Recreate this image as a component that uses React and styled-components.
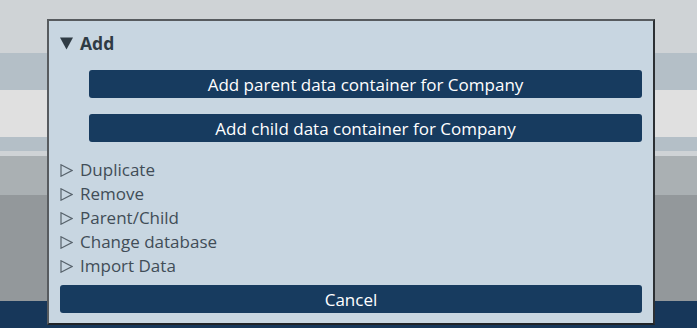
import styled, { createGlobalStyle } from "styled-components";

const GlobalStyle = createGlobalStyle`
  html, body {
    margin: 0;
    padding: 0;
    width: 697px;
    height: 328px;
    overflow: hidden;
  }
  body {
    font-family: "Open Sans", "Noto Sans", sans-serif;
  }
`;

/**
 * Page behind the dialog: a stack of grey bands
 */
const Page = styled.div`
  position: relative;
  width: 697px;
  height: 328px;
  display: flex;
  flex-direction: column;
  overflow: hidden;
`;

const Band = styled.div`
  height: ${(p) => p.$h}px;
  background: ${(p) => p.$bg};
  flex-shrink: 0;
`;

// modal floats above the page
const Dialog = styled.div`
  position: absolute;
  left: 47px;
  top: 19px;
  width: 582px;
  height: 281px;
  background: #c8d6e1;
  border: 2px solid #575b5f;
  border-right-color: #2c3034;
  border-bottom-color: #1f2327;
  display: flex;
  flex-direction: column;
  padding: 10px 11px 11px 11px;
`;

const Section = styled.div`
  display: flex;
  flex-direction: column;
`;

const SectionHead = styled.div`
  display: flex;
  align-items: center;
  gap: 7px;
  height: 24px;
  font-size: ${(p) => (p.$open ? "17.5px" : "17px")};
  font-weight: ${(p) => (p.$open ? 700 : 400)};
  color: ${(p) => (p.$open ? "#2f3b44" : "#414d57")};
  line-height: 24px;
`;

const Arrow = styled.svg`
  width: 13px;
  height: 13px;
  flex-shrink: 0;
`;

const ActionList = styled.div`
  display: flex;
  flex-direction: column;
  gap: 16px;
  padding: 15px 0 16px 29px;
`;

const Button = styled.button`
  height: 28px;
  width: 100%;
  border: none;
  border-radius: 3px;
  background: #173b5f;
  color: #ffffff;
  font-family: "Open Sans", "Noto Sans", sans-serif;
  font-size: 17px;
  padding: 0;
  display: flex;
  align-items: center;
  justify-content: center;
  cursor: pointer;
`;

const Footer = styled.div`
  margin-top: 7px;
  display: flex;
`;

const Triangle = ({ open }) =>
  open ? (
    <Arrow viewBox="0 0 13 13">
      <polygon points="0,0.5 13,0.5 6.5,12.5" fill="#2f3b44" />
    </Arrow>
  ) : (
    <Arrow viewBox="0 0 13 13">
      <polygon
        points="1,0.8 12,6.5 1,12.2"
        fill="none"
        stroke="#58636c"
        strokeWidth="1.2"
      />
    </Arrow>
  );

const closedSections = [
  "Duplicate",
  "Remove",
  "Parent/Child",
  "Change database",
  "Import Data",
];

const bands = [
  { h: 53, bg: "#cfd3d6" },
  { h: 37, bg: "#b4bfc7" },
  { h: 47, bg: "#e0e0e0" },
  { h: 14, bg: "#b4bfc7" },
  { h: 5, bg: "#cfd3d6" },
  { h: 39, bg: "#aab0b3" },
  { h: 106, bg: "#93989b" },
  { h: 27, bg: "#17375a" },
];

const App = () => {
  return (
    <>
      <GlobalStyle />
      <Page>
        {bands.map((b, i) => (
          <Band key={i} $h={b.h} $bg={b.bg} />
        ))}

        <Dialog>
          <Section>
            <SectionHead $open>
              <Triangle open />
              Add
            </SectionHead>
            <ActionList>
              <Button>Add parent data container for Company</Button>
              <Button>Add child data container for Company</Button>
            </ActionList>
          </Section>

          {closedSections.map((label) => (
            <SectionHead key={label}>
              <Triangle />
              {label}
            </SectionHead>
          ))}

          <Footer>
            <Button>Cancel</Button>
          </Footer>
        </Dialog>
      </Page>
    </>
  );
};

export default App;
